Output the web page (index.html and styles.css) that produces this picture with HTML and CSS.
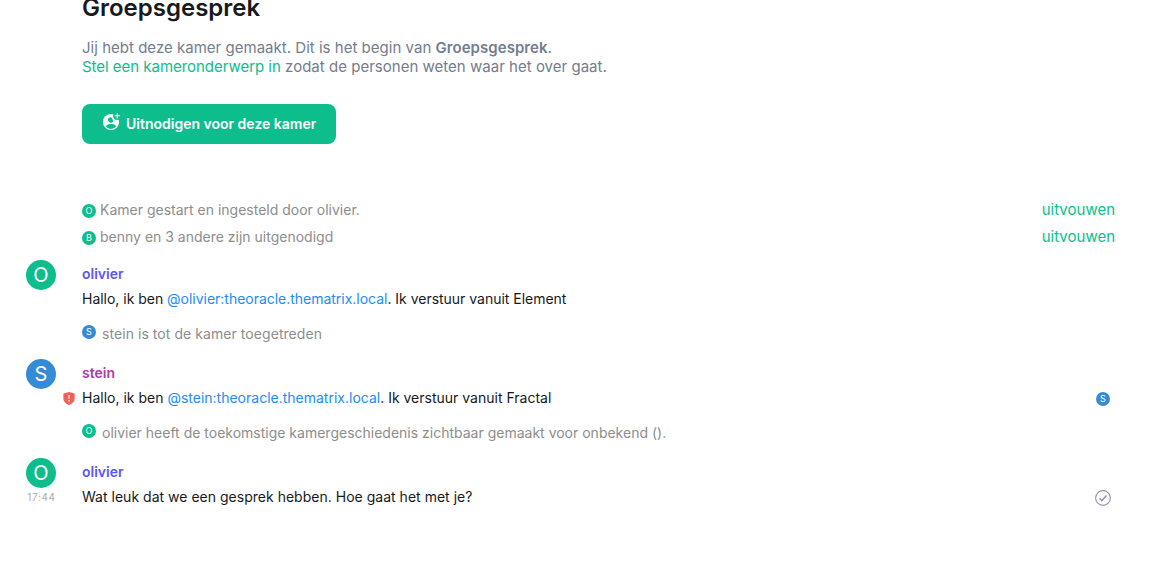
FILE: index.html
```html
<!DOCTYPE html>
<html lang="nl">
<head>
<meta charset="utf-8">
<title>Groepsgesprek</title>
<link rel="stylesheet" href="styles.css">
</head>
<body>
<main class="timeline">
  <section class="intro">
    <h2 class="intro-title">Groepsgesprek</h2>
    <p class="intro-text">Jij hebt deze kamer gemaakt. Dit is het begin van <b>Groepsgesprek</b>.<br><a class="link topic">Stel een kameronderwerp in</a> zodat de personen weten waar het over gaat.</p>
    <button class="invite">
      <svg class="invite-icon" viewBox="0 0 18 18"><circle cx="9" cy="9" r="8.1" fill="#fff"/><circle cx="15.2" cy="2.8" r="4.2" fill="#0dbd8b"/><path fill="#0dbd8b" d="M8.2 4.2C10 4.2 10.4 5.8 11 7.2C11.5 8.6 10.5 9.7 9 9.7C7.3 9.7 6 8.5 6 6.8C6 5.4 6.9 4.2 8.2 4.2Z"/><path fill="#0dbd8b" d="M3.8 13.6C4.8 11.6 6.8 11 9 11s4.2.6 5.2 2.6A6.7 6.7 0 0 1 3.8 13.6Z"/><path d="M15.2 .2v5.2M12.6 2.8h5.2" stroke="#fff" stroke-width="1.1"/></svg>
      <span>Uitnodigen voor deze kamer</span>
    </button>
  </section>
  <div class="summary"><i class="mini green">O</i><span>Kamer gestart en ingesteld door olivier.</span><a class="link expand">uitvouwen</a></div>
  <div class="summary"><i class="mini green">B</i><span>benny en 3 andere zijn uitgenodigd</span><a class="link expand">uitvouwen</a></div>

  <article class="message first">
    <div class="avatar green">O</div>
    <div class="body"><div class="sender violet">olivier</div>
    <div class="line"><span class="mention">Hallo, ik ben <a class="pill">@olivier:theoracle.thematrix.local</a>. Ik verstuur vanuit Element</span></div></div>
  </article>
  <div class="event"><i class="mini blue">S</i><span class="joined">stein is tot de kamer toegetreden</span></div>
  <article class="message">
    <div class="avatar blue">S</div>
    <svg class="shield" viewBox="0 0 12 13"><path fill="#ff5b55" d="M6 0L11.6 1.6V6.5C11.6 9.8 8.9 11.8 6 13C3.1 11.8.4 9.8.4 6.5V1.6Z"/><path d="M6 3v3.8M6 8v1.5" stroke="#fff" stroke-width="1.4"/></svg>
    <div class="body"><div class="sender purple">stein</div>
    <div class="line"><span>Hallo, ik ben <a class="pill">@stein:theoracle.thematrix.local</a>. Ik verstuur vanuit Fractal</span><i class="mini blue receipt">S</i></div></div>
  </article>
  <div class="event"><i class="mini green">O</i><span>olivier heeft de toekomstige kamergeschiedenis zichtbaar gemaakt voor onbekend ().</span></div>
  <article class="message">
    <div class="avatar green">O</div>
    <time class="time">17:44</time>
    <div class="body"><div class="sender violet">olivier</div>
    <div class="line"><span class="plain">Wat leuk dat we een gesprek hebben. Hoe gaat het met je?</span><svg class="sent" viewBox="0 0 16 16"><circle cx="8" cy="8" r="7.4"/><path d="M4.5 8.3L6.9 10.6L11.5 5.6" stroke-width="1.5"/></svg></div></div>
  </article>
</main>
</body>
</html>
```

FILE: styles.css
```css
* { box-sizing: border-box; }
body { margin: 0; background: #fff; color: #17191c; font: 14px/22px Inter, sans-serif; overflow: hidden; }
.timeline { height: 563px; padding: 0 41px 0 26px; overflow: hidden; }
.intro { display: flow-root; padding-left: 56px; height: 196px; }
.intro-title { margin: -7px 0 0; font-size: 24px; line-height: 29px; font-weight: 600; }
.intro-text { margin: 16px 0 28px; font-size: 15px; line-height: 19px; letter-spacing: .02px; color: #737d8c; }
.intro-text b { font-weight: 600; letter-spacing: .05px; }
.link { color: #0dbd8b; }
.topic { letter-spacing: -.03px; }
.invite { display: flex; align-items: center; gap: 6px; width: 254px; height: 40px; padding: 0 20px; border: 0; border-radius: 8px; background: #0dbd8b; color: #fff; font: 600 14px/20px Inter, sans-serif; white-space: nowrap; }
.invite-icon { width: 18px; height: 18px; margin-top: -4px; flex: none; }
.summary { display: flex; align-items: center; height: 27px; margin-left: 56px; gap: 4px; color: #8d8d8d; }
.summary .mini { margin-top: 2px; }
.expand { margin-left: auto; font-size: 15px; }
.mini { display: flex; align-items: center; justify-content: center; flex: none; width: 14px; height: 14px; border-radius: 50%; color: #fff; font: normal 9px/14px Inter, sans-serif; }
.green { background: #0dbd8b; }
.blue { background: #368bd6; }
.message { display: grid; grid-template-columns: 30px 26px 1fr; height: 60px; position: relative; }
.first { margin-top: 10px; }
.avatar { grid-column: 1; width: 30px; height: 30px; border-radius: 50%; color: #fff; font-size: 20px; line-height: 30px; text-align: center; }
.body { grid-column: 3; grid-row: 1; }
.sender { font-weight: 600; line-height: 28px; height: 28px; }
.violet { color: #5c56f5; }
.purple { color: #ac3ba8; }
.line { display: flex; justify-content: space-between; align-items: center; height: 22px; }
.mention { letter-spacing: -.02px; }
.plain { letter-spacing: .015px; }
.joined { letter-spacing: .06px; }
.pill { color: #238cf5; }
.event { display: flex; gap: 6px; height: 39px; margin-left: 56px; padding-top: 3px; color: #8d8d8d; }
.event .mini { margin-top: 2px; }
.shield { position: absolute; left: 37px; top: 33px; width: 12px; height: 13px; }
.receipt { margin: 2px 5px 0 0; }
.time { position: absolute; left: 0; top: 28px; width: 31px; text-align: center; font-size: 10px; letter-spacing: .65px; color: #acacac; }
.sent { width: 16px; height: 16px; margin: 2px 4px 0 0; fill: none; stroke: #8d97a5; stroke-width: 1.1; }
```
